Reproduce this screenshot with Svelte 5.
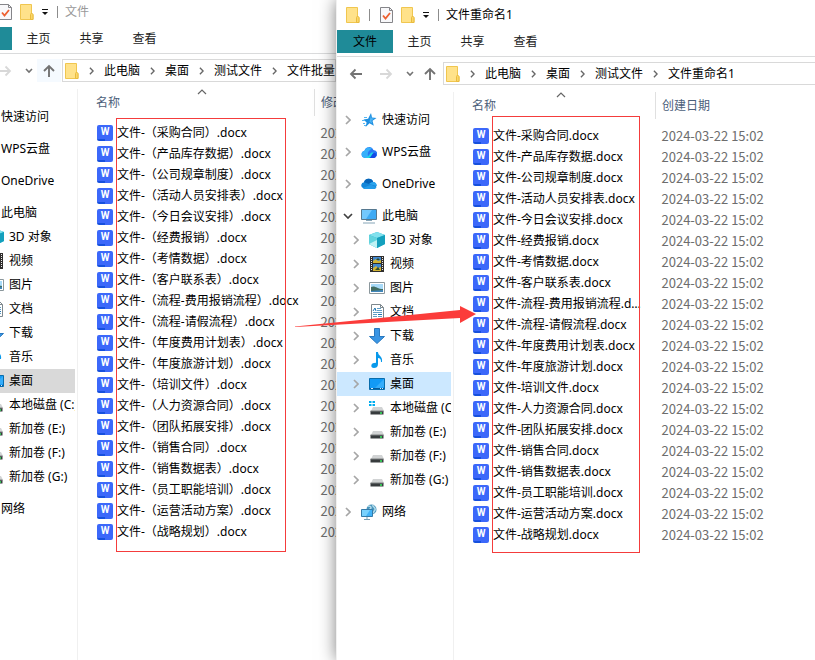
<script lang="ts">
  const subjects = [
    "采购合同",
    "产品库存数据",
    "公司规章制度",
    "活动人员安排表",
    "今日会议安排",
    "经费报销",
    "考情数据",
    "客户联系表",
    "流程-费用报销流程",
    "流程-请假流程",
    "年度费用计划表",
    "年度旅游计划",
    "培训文件",
    "人力资源合同",
    "团队拓展安排",
    "销售合同",
    "销售数据表",
    "员工职能培训",
    "运营活动方案",
    "战略规划"
  ];

  const windows = [
    {
      id: "before",
      title: "文件",
      path: ["此电脑", "桌面", "测试文件", "文件批量重命名"],
      dateLabel: "修改日期",
      files: subjects.map((s) => `文件-（${s}）.docx`)
    },
    {
      id: "after",
      title: "文件重命名1",
      path: ["此电脑", "桌面", "测试文件", "文件重命名1"],
      dateLabel: "创建日期",
      files: subjects.map((s) => `文件-${s}.docx`)
    }
  ];

  const places = [
    { label: "快速访问", icon: "star" },
    { label: "WPS云盘", icon: "wps" },
    { label: "OneDrive", icon: "onedrive" },
    {
      label: "此电脑",
      icon: "pc",
      children: [
        { label: "3D 对象", icon: "cube" },
        { label: "视频", icon: "video" },
        { label: "图片", icon: "picture" },
        { label: "文档", icon: "document" },
        { label: "下载", icon: "download" },
        { label: "音乐", icon: "music" },
        { label: "桌面", icon: "desktop" },
        { label: "本地磁盘 (C:)", icon: "system" },
        { label: "新加卷 (E:)", icon: "drive" },
        { label: "新加卷 (F:)", icon: "drive" },
        { label: "新加卷 (G:)", icon: "drive" }
      ]
    },
    { label: "网络", icon: "network" }
  ];

  let selected = $state("桌面");
</script>

{#snippet folder()}
  <svg width="14" height="16" viewBox="0 0 14 16" aria-hidden="true">
    <path d="M.5 .5h11v9l1.5 1v5H.5z" fill="#ffe28a" stroke="#f0c64f" />
    <path d="M10.500 15.500v-5l1-1.500 1.500 1.500v5z" fill="#fbd768" stroke="#e9bb3e" />
  </svg>
{/snippet}

{#snippet chevron()}
  <svg width="6" height="10" viewBox="0 0 6 10" aria-hidden="true">
    <path d="M1 1l4 4-4 4" fill="none" stroke="currentColor" stroke-width="1.7" />
  </svg>
{/snippet}

{#snippet icon(name: string)}
  <svg class="icon" width="16" height="16" viewBox="0 0 16 16" aria-hidden="true">
    {#if name === "star"}
      <path d="M10 1l1 4.600 4.500.4-4 2.800 1.300 5-4.300-2.600L4.600 15l1-4.500L2.500 7.500l4.600-.7z" fill="#1f8fe0" />
      <path d="M10 3l.4 3.200 3 .3-3 2 .8 3-2.700-1.800z" fill="#4fb5f5" />
      <path d="M3 5.500h3M1 8.500h3M2 11.500h2M3 13.500h2" stroke="#56b7f2" />
    {:else if name === "wps"}
      <path d="M4 14a3.700 3.700 0 01-.5-7.300A4.700 4.700 0 0112.400 6 4 4 0 0112 14z" fill="#2878f5" />
      <path d="M4 14a3.700 3.700 0 01-.5-7.300A4.700 4.700 0 0111 4.500c-3 2-5 4-4 7L10 14z" fill="#36b0fa" />
      <path d="M4 13.900c4-.4 4.500-4.900 7-5.400 2-.4 3 1 2 3.500-.5 1.200-1.500 1.900-3 1.900z" fill="#1ed8e4" />
      <path d="M8 14c2.500-1 2.600-4 4.500-5 2-.6 3 1 2.800 2.400-.5 1.600-1.500 2.600-3.300 2.600z" fill="#124ae6" />
    {:else if name === "onedrive"}
      <path d="M2 12a3 3 0 011-5.700A4.800 4.800 0 0112.200 6 3.600 3.600 0 0113 13H4z" fill="#1486d8" />
      <path d="M3 6.300A4.800 4.800 0 0112.200 6c-2 0-3.200 1-4 2z" fill="#0764b8" />
      <path d="M8.200 8c1.200-1.300 2.500-2 4-2a3.500 3.500 0 013.500 4z" fill="#2ba4ed" />
      <path d="M2 12l8-3.200 5.500 2.400c-.5 1.200-1.500 1.800-2.500 1.800H4c-1 0-1.500-.3-2-1z" fill="#249be8" />
    {:else if name === "pc"}
      <path d="M.5 1.500h15v10H.5z" fill="#3eaaf4" stroke="#56788f" />
      <path d="M1 2h10L5 11H1z" fill="#72c8fd" />
      <path d="M5 12.500h6M2 15h12" stroke="#86a5b7" />
    {:else if name === "cube"}
      <path d="M8 0l8 3v9l-8 4-8-4V3z" fill="#26b7d4" />
      <path d="M8 0l8 3-8 3-8-3z" fill="#82e1ed" />
      <path d="M0 3l8 3v10l-8-4z" fill="#62d3dd" />
      <path d="M0 12l8-4v8z" fill="#bff2f4" />
      <path d="M8 6l8-3v9l-8 4z" fill="#14a0bd" />
    {:else if name === "video"}
      <path d="M1 0h14v16H1z" fill="#302e2d" />
      <path d="M4 1h8v6H4zM4 8h8v7H4z" fill="#4288ce" />
      <path d="M4 5l3-2 2 2 3-1v3H4zM4 12l3-2 2 2 3-1v4H4z" fill="#d1b434" />
      <path d="M7 4l2-2 2 2zM6 14l3-3 2 3z" fill="#334d2b" />
      <path d="M2.500 1v14M13.500 1v14" stroke="#ececec" stroke-dasharray="1 1" />
    {:else if name === "picture"}
      <path d="M.5 2.500h15v11H.5z" fill="#fff" stroke="#8b979c" />
      <path d="M2 4h12v8H2z" fill="#a8daf8" />
      <path d="M2 7c4-2 6 2 12 2v3H2z" fill="#426d61" />
      <path d="M2 11l12-1v2H2z" fill="#4288bd" />
    {:else if name === "document"}
      <path d="M2.500.5h9l3 3v12h-12z" fill="#fff" stroke="#7d878d" />
      <path d="M11.500.5v3h3" fill="none" stroke="#7d878d" />
      <path d="M8 4.500h4M8 6.500h5M4 8.500h9M4 10.500h4M4 12.500h4M9 12.500h4" stroke="#5f9ec7" />
      <path d="M4 7l2-3 1 3M9 10.500h4" stroke="#1e75b0" fill="none" />
    {:else if name === "download"}
      <path d="M5.500.5h5v8h5L8 15.500.5 8.500h5z" fill="#3995e4" stroke="#2878bf" />
    {:else if name === "music"}
      <path d="M7 0h2c0 4 5 4 4 10h-1c0-3-1-4-3-4v6c0 3-2 4-4 4-4 0-3-5 0-5l2-.3z" fill="#0899eb" />
    {:else if name === "desktop"}
      <path d="M.5 2.500h15v11H.5z" fill="#129af6" stroke="#086dac" />
      <path d="M15 3v8L5 13z" fill="#35adfb" />
      <path d="M1 12.500h14" stroke="#075a9a" />
      <path d="M2 12.500h2M11 12.500h1M13 12.500h1" stroke="#d3eefe" />
    {:else if name === "network"}
      <circle cx="10.500" cy="5.500" r="5" fill="#4a96bd" />
      <path d="M7 2c2 0 3 0 3 2L8 6M12 1c-1 2 3 2 2 5l-2 3" fill="none" stroke="#b5dcea" stroke-width="1.500" />
      <path d="M.5 5.500h11v7H.5z" fill="#42b3f8" stroke="#347ba9" />
      <path d="M1 6h8l-4 6H1z" fill="#78d1fd" />
      <path d="M6 13v2M3 15.500h6" stroke="#769eb4" />
    {:else}
      {#if name === "system"}
        <path d="M0 1h2.500v2H0zM3.500 1H6v2H3.500zM0 4h2.500v2H0zM3.500 4H6v2H3.500z" fill="#00adef" />
      {/if}
      <path d="M4 7h9l2 4H2z" fill="#d1d3d4" />
      <path d="M1.500 11h13v3.500h-13z" fill="#373b3d" />
      <path d="M1.500 11h13" stroke="#7d8081" />
      <path d="M11 13h2" stroke="#38f060" stroke-width="1.500" />
    {/if}
  </svg>
{/snippet}

{#snippet place(item: { label: string; icon: string }, open: boolean)}
  <div class="place" class:active={selected === item.label}>
    <button class="toggle" class:open aria-label="展开 {item.label}">{@render chevron()}</button>
    <a
      href="#{item.label}"
      onclick={(e) => {
        e.preventDefault();
        selected = item.label;
      }}
    >
      {@render icon(item.icon)}
      <span>{item.label}</span>
    </a>
  </div>
{/snippet}

<main class="screen">
  {#each windows as win (win.id)}
    <section class="window {win.id}" aria-label={win.title}>
      <header class="titlebar">
        <button aria-label="窗口菜单">{@render folder()}</button>
        <i class="bar"></i>
        <button aria-label="属性">
          <svg width="13" height="16" viewBox="0 0 13 16" aria-hidden="true">
            <path d="M.5.5h9l3 3v12H.5z" fill="#f8f8fa" stroke="#858589" />
            <path d="M9.500.5v3h3" fill="none" stroke="#858589" />
            <path d="M3 8.500l2.500 3L10 6" fill="none" stroke="#ed6030" stroke-width="1.800" />
          </svg>
        </button>
        <button aria-label="新建文件夹">{@render folder()}</button>
        <button class="customize" aria-label="自定义快速访问工具栏">
          <svg width="8" height="8" viewBox="0 0 8 8" aria-hidden="true">
            <path d="M1 1.500h6" stroke="#111" />
            <path d="M1 4h6L4 7z" fill="#111" />
          </svg>
        </button>
        <i class="bar"></i>
        <h1>{win.title}</h1>
      </header>

      <nav class="ribbon" aria-label="功能区">
        <button class="file">文件</button>
        <button>主页</button>
        <button>共享</button>
        <button>查看</button>
      </nav>

      <div class="toolbar">
        <button class="go" aria-label="后退">
          <svg width="14" height="12" viewBox="0 0 14 12" aria-hidden="true">
            <path d="M13 6H2M6.500 1.500L2 6l4.500 4.500" fill="none" stroke="#737373" stroke-width="1.800" />
          </svg>
        </button>
        <button class="go" aria-label="前进">
          <svg width="14" height="12" viewBox="0 0 14 12" aria-hidden="true">
            <path d="M1 6h11M7.500 1.500L12 6l-4.500 4.500" fill="none" stroke="#d8d8d8" stroke-width="1.800" />
          </svg>
        </button>
        <button class="recent" aria-label="最近浏览的位置">
          <svg width="8" height="6" viewBox="0 0 8 6" aria-hidden="true">
            <path d="M1 1l3 3 3-3" fill="none" stroke="#737373" stroke-width="1.600" />
          </svg>
        </button>
        <button class="up" aria-label="上移">
          <svg width="12" height="14" viewBox="0 0 12 14" aria-hidden="true">
            <path d="M6 13V2M1 7l5-5 5 5" fill="none" stroke="#737373" stroke-width="1.900" />
          </svg>
        </button>
        <div class="address">
          {@render folder()}
          {#each win.path as part}
            <span class="crumb-sep">{@render chevron()}</span>
            <a href="#{part}">{part}</a>
          {/each}
        </div>
      </div>

      <div class="body">
        <nav class="tree" aria-label="导航窗格">
          {#each places as item}
            <div class="group">
              {@render place(item, !!item.children)}
              {#if item.children}
                <div class="children">
                  {#each item.children as child}
                    {@render place(child, false)}
                  {/each}
                </div>
              {/if}
            </div>
          {/each}
        </nav>

        <table>
          <thead>
            <tr>
              <th class="name">
                名称
                <svg class="sort" width="10" height="6" viewBox="0 0 10 6" aria-hidden="true">
                  <path d="M1 5l4-4 4 4" fill="none" stroke="#666" stroke-width="1.200" />
                </svg>
              </th>
              <th class="date">{win.dateLabel}</th>
            </tr>
          </thead>
          <tbody>
            {#each win.files as file}
              <tr>
                <td class="name">
                  <div class="file-name">
                    <span class="doc-icon" aria-hidden="true">W</span>
                    <span class="label">{file}</span>
                  </div>
                </td>
                <td class="date">2024-03-22 15:02</td>
              </tr>
            {/each}
          </tbody>
        </table>
      </div>
      <div class="mark"></div>
    </section>
  {/each}

  <svg class="arrow" width="182" height="18" viewBox="0 0 182 18" aria-hidden="true">
    <path d="M0 20.500L165 4V0l16 8-16 9v-5L0 21z" fill="#fb3c3a" />
  </svg>
</main>

<style>
  :global(body) {
    margin: 0;
  }

  .screen {
    position: relative;
    height: 100vh;
    min-height: 560px;
    overflow: hidden;
    background: #fff;
    color: #000;
    font-family: "Noto Sans", "Noto Sans CJK SC", sans-serif;
    font-size: 12px;
    line-height: 20px;
  }

  .window {
    position: absolute;
    top: 0;
    bottom: 0;
    display: flex;
    flex-direction: column;
    border-left: 1px solid #f0f0f0;
    background: #fff;
  }

  .before {
    --tree-width: 119px;
    --name-width: 225px;
    top: -3px;
    left: -45px;
    width: 380px;
    overflow: hidden;
  }

  .after {
    --tree-width: 114px;
    --name-width: 190px;
    left: 336px;
    right: -24px;
    box-shadow: 0 0 16px rgba(0, 0, 0, 0.5);
  }

  button {
    display: flex;
    align-items: center;
    justify-content: center;
    padding: 0;
    border: 0;
    background: none;
    color: inherit;
    font: inherit;
  }

  a {
    color: inherit;
    text-decoration: none;
  }

  svg {
    display: block;
    flex: none;
  }

  .titlebar {
    display: flex;
    align-items: center;
    height: 30px;
    padding-left: 5px;
  }

  .titlebar button {
    width: 22px;
    height: 22px;
  }

  .titlebar .customize {
    width: 14px;
  }

  .bar {
    width: 1px;
    height: 12px;
    margin: 0 5px;
    background: #8c8c8c;
  }

  h1 {
    margin: 0;
    padding-left: 2px;
    font-size: 12px;
    font-weight: 400;
  }

  .before h1 {
    color: #999;
  }

  .ribbon {
    display: flex;
    height: 26px;
    border-bottom: 1px solid #dadbdc;
    color: #222;
  }

  .ribbon button {
    width: 53px;
    height: 23px;
  }

  .ribbon .file {
    width: 56px;
    background: #1f8b98;
    color: #000;
  }

  .toolbar {
    display: flex;
    padding: 5px 0 7px 4px;
  }

  .go {
    width: 30px;
  }

  .recent {
    width: 17px;
  }

  .up {
    width: 24px;
  }

  .before .up {
    background: #f5faff;
  }

  .address {
    display: flex;
    flex: 1;
    align-items: center;
    height: 21px;
    margin-left: 1px;
    padding-left: 2px;
    border: 1px solid #d9d9d9;
    overflow: hidden;
    white-space: nowrap;
  }

  .crumb-sep {
    display: flex;
    flex: none;
    justify-content: center;
    width: 25px;
    color: #666;
  }

  .crumb-sep svg {
    width: 5px;
    height: 8px;
  }

  .body {
    display: flex;
    flex: 1;
    align-items: stretch;
  }

  .tree {
    flex: none;
    width: var(--tree-width);
    padding: 16px 2px 0 0;
    border-right: 1px solid #f0f0f0;
  }

  .group {
    margin-bottom: 8px;
  }

  .place {
    display: flex;
    align-items: center;
    height: 24px;
    overflow: hidden;
    white-space: nowrap;
  }

  .place a {
    display: flex;
    align-items: center;
    gap: 5px;
  }

  .children .place {
    padding-left: 8px;
  }

  .toggle {
    flex: none;
    width: 22px;
    height: 24px;
    margin-right: 2px;
    color: #a6a6a6;
  }

  .toggle.open svg {
    transform: rotate(90deg);
    color: #404040;
  }

  .active {
    background: #cce8ff;
  }

  .before .active {
    background: #d9d9d9;
  }

  table {
    flex: none;
    align-self: flex-start;
    width: 340px;
    margin-left: 12px;
    border-collapse: collapse;
    table-layout: fixed;
  }

  th {
    position: relative;
    height: 27px;
    padding: 0 0 0 6px;
    border-right: 1px solid #e0e0e0;
    color: #4c607a;
    font-weight: 400;
    text-align: left;
    white-space: nowrap;
  }

  th.name {
    width: calc(var(--name-width) - 7px);
  }

  th.date {
    border-right: 0;
  }

  .sort {
    position: absolute;
    top: 0;
    left: calc(50% - 5px);
  }

  tbody::before {
    content: "";
    display: block;
    height: 6px;
  }

  td {
    height: 21px;
    padding: 0 0 0 7px;
    white-space: nowrap;
  }

  td.date {
    padding-left: 6px;
    color: #6d6d6d;
    font-family: "Noto Sans CJK SC", sans-serif;
    font-size: 13px;
  }

  .file-name {
    display: flex;
    align-items: center;
    gap: 4px;
    padding-right: 10px;
  }

  .label {
    overflow: hidden;
    text-overflow: ellipsis;
  }

  .doc-icon {
    flex: none;
    width: 16px;
    height: 16px;
    border-radius: 2px;
    background: linear-gradient(#1650dd, #1650dd) 0 100% / 8px 2px no-repeat #3c68fa;
    color: #fff;
    font-family: Roboto, sans-serif;
    font-size: 10px;
    font-weight: 700;
    line-height: 14px;
    text-align: center;
  }

  .mark {
    position: absolute;
    top: 116px;
    left: 155px;
    width: 146px;
    height: 435px;
    border: 1px solid #f43c3c;
    pointer-events: none;
  }

  .before .mark {
    top: 121px;
    left: 160px;
    width: 168px;
    height: 432px;
  }

  .arrow {
    position: absolute;
    top: 306px;
    left: 295px;
    overflow: visible;
    pointer-events: none;
  }
</style>
